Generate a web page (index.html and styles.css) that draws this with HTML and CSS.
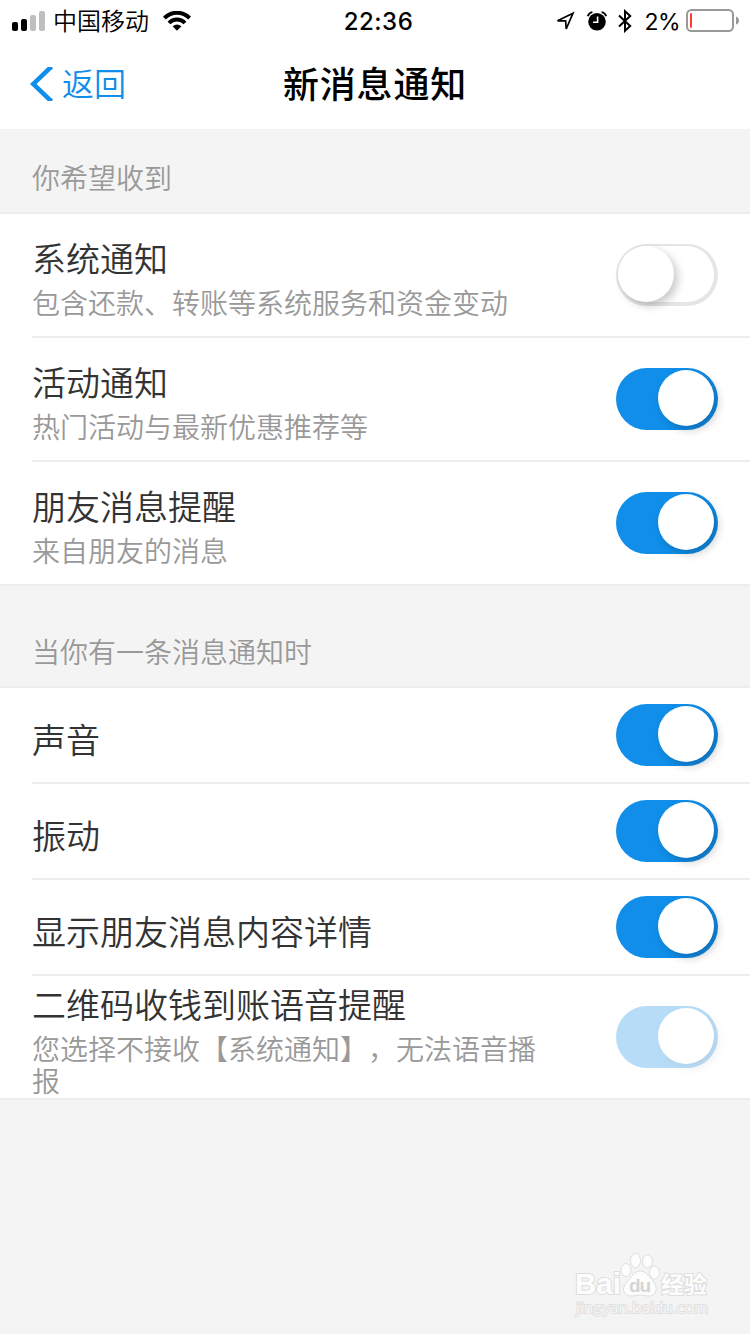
FILE: index.html
```
<!DOCTYPE html>
<html lang="zh-CN">
<head>
    <meta charset="UTF-8">
    <title>新消息通知</title>
    <link rel="stylesheet" href="styles.css">
</head>
<body>

<header>
    <div class="status-bar">
        <div class="status-left">
            <svg class="signal" width="34" height="20" viewBox="0 0 34 20">
                <rect x="0" y="11" width="6" height="9" rx="2"/>
                <rect x="9" y="8" width="6" height="12" rx="2"/>
                <rect x="18" y="4" width="6" height="16" rx="2" fill="#bfbfbf"/>
                <rect x="27" y="0" width="6" height="20" rx="2" fill="#bfbfbf"/>
            </svg>
            <span class="carrier">中国移动</span>
            <svg class="wifi" width="28" height="20" viewBox="0 0 28 20">
                <path d="M1.4 7.2C8.4-.1 19.6-.1 26.6 7.2" fill="none" stroke="#000" stroke-width="4"/>
                <path d="M6 12C10.4 7.3 17.6 7.3 22 12" fill="none" stroke="#000" stroke-width="3.8"/>
                <path d="M9.6 15.3Q14 11.5 18.4 15.3L14 19.8Z"/>
            </svg>
        </div>
        <div class="time">22:36</div>
        <div class="status-right">
            <svg width="20" height="20" viewBox="0 0 20 20">
                <path d="M2.5 9.8L18 2.2L11.2 18L10.6 9.8Z" fill="none" stroke="#000" stroke-width="1.7"/>
            </svg>
            <svg class="alarm" width="20" height="20" viewBox="0 0 20 20">
                <circle cx="10" cy="10.8" r="8.8"/>
                <path d="M.8 5.2Q2 1.800 5.400 1.200M19.200 5.200Q18 1.800 14.600 1.200" fill="none" stroke="#000" stroke-width="1.8"/>
                <path d="M10.600 5.500V11.300H6" fill="none" stroke="#fff" stroke-width="1.6"/>
            </svg>
            <svg class="bluetooth" width="14" height="24" viewBox="0 0 14 24">
                <path d="M1 6.500L12.200 17L7 21.800V2.200L12.200 7L1 17.500" fill="none" stroke="#000" stroke-width="2"/>
            </svg>
            <span class="percent">2%</span>
            <svg class="battery" width="54" height="24" viewBox="0 0 54 24">
                <rect x="1" y="1" width="46" height="21" rx="4.5" fill="#fff" stroke="#999" stroke-width="2"/>
                <rect x="4" y="4" width="2" height="15" rx="1" fill="#ff3b30"/>
                <path d="M50 7.5Q53 8.5 53 11.5Q53 14.5 50 15.5Z" fill="#999"/>
            </svg>
        </div>
    </div>
    <div class="nav-bar">
        <a class="back" href="#">
            <svg width="24" height="34" viewBox="0 0 24 34">
                <path d="M21.500 -.5L3.200 17L21.500 34.500" fill="none" stroke="#108ee9" stroke-width="4.500"/>
            </svg>
            <span>返回</span>
        </a>
        <h1>新消息通知</h1>
    </div>
</header>

<h2 class="first">你希望收到</h2>
<ul>
    <li>
        <div class="text">
            <p class="name">系统通知</p>
            <p class="desc">包含还款、转账等系统服务和资金变动</p>
        </div>
        <span class="switch"></span>
    </li>
    <li>
        <div class="text">
            <p class="name">活动通知</p>
            <p class="desc">热门活动与最新优惠推荐等</p>
        </div>
        <span class="switch on"></span>
    </li>
    <li>
        <div class="text">
            <p class="name">朋友消息提醒</p>
            <p class="desc">来自朋友的消息</p>
        </div>
        <span class="switch on"></span>
    </li>
</ul>

<h2>当你有一条消息通知时</h2>
<ul>
    <li class="single">
        <p class="name">声音</p>
        <span class="switch on"></span>
    </li>
    <li class="single">
        <p class="name">振动</p>
        <span class="switch on"></span>
    </li>
    <li class="single">
        <p class="name">显示朋友消息内容详情</p>
        <span class="switch on"></span>
    </li>
    <li class="long">
        <div class="text">
            <p class="name">二维码收钱到账语音提醒</p>
            <p class="desc">您选择不接收【系统通知】，无法语音播报</p>
        </div>
        <span class="switch on disabled"></span>
    </li>
</ul>

<footer>
    <svg class="watermark" width="140" height="70" viewBox="0 0 140 70">
        <text class="brand" x="5" y="44" textLength="46" lengthAdjust="spacingAndGlyphs">Bai</text>
        <ellipse cx="56" cy="20" rx="5" ry="6.5"/>
        <ellipse cx="65.5" cy="10.5" rx="5" ry="7"/>
        <ellipse cx="77.5" cy="11.5" rx="5" ry="6.5"/>
        <ellipse cx="84.5" cy="22.5" rx="5" ry="6.5"/>
        <path d="M70 21C76 21 79 26 83 31C89 38 86 46 79 46C75 46 73 45 70 45C67 45 65 46 61 46C53 46 51 38 57 32C61 28 64 21 70 21Z"/>
        <text class="du" x="59" y="42" textLength="22">du</text>
        <text class="cn" x="91" y="43" textLength="46">经验</text>
        <text class="url" x="6" y="63" textLength="132" lengthAdjust="spacingAndGlyphs">jingyan.baidu.com</text>
    </svg>
</footer>

</body>
</html>
```
FILE: styles.css
```
* {
    box-sizing: border-box;
}
body {
    margin: 0;
    min-height: 1334px;
    background: #f4f4f4;
    font-family: "Noto Sans CJK SC", sans-serif;
    font-weight: 350;
    display: flex;
    flex-direction: column;
    text-spacing-trim: space-all;
}
h1, h2, p, ul {
    margin: 0;
    padding: 0;
}
header {
    height: 129px;
    background: #fff;
}
.status-bar {
    height: 41px;
    display: grid;
    grid-template-columns: 1fr auto 1fr;
    align-items: center;
    padding: 0 10px 0 12px;
    font-size: 24px;
    line-height: 40px;
}
.status-left, .status-right {
    display: flex;
    align-items: center;
}
.signal {
    margin-bottom: 1px;
}
.carrier {
    margin: 0 14px 0 7px;
    padding-bottom: 2px;
}
.wifi {
    margin-bottom: 1px;
}
.time {
    font-family: Inter, sans-serif;
    font-weight: 500;
    font-size: 24px;
    letter-spacing: 0.5px;
    padding: 1px 0 0 5px;
}
.status-right {
    justify-content: flex-end;
}
.status-right svg:not(.battery) {
    margin-bottom: 1px;
}
.alarm {
    margin: 0 11px 0 12px;
}
.percent {
    font-family: Inter, sans-serif;
    font-weight: 400;
    font-size: 23px;
    letter-spacing: -0.6px;
    padding-top: 1px;
    margin: 0 6px 0 13px;
}
.nav-bar {
    height: 87px;
    display: grid;
    grid-template-columns: 1fr auto 1fr;
    align-items: center;
    padding: 0 30px;
}
.back {
    display: flex;
    align-items: center;
    gap: 8px;
    color: #108ee9;
    font-size: 32px;
    line-height: 40px;
    text-decoration: none;
}
.back svg {
    margin-bottom: 2px;
}
.back span {
    padding-bottom: 5px;
}
h1 {
    font-size: 36px;
    line-height: 48px;
    font-weight: 500;
    letter-spacing: 0.8px;
    padding-bottom: 5px;
}
h2 {
    height: 100px;
    padding: 45px 32px 0;
    font-size: 28px;
    line-height: 40px;
    font-weight: 350;
    color: #999;
}
h2.first {
    height: 83px;
    padding-top: 28px;
}
ul {
    list-style: none;
    background: #fff;
    border-top: 2px solid #ededed;
    border-bottom: 2px solid #ededed;
}
li {
    height: 124px;
    margin-left: 32px;
    padding-right: 32px;
    border-bottom: 2px solid #ededed;
    display: flex;
    align-items: center;
    justify-content: space-between;
}
li:last-child {
    height: 122px;
    border-bottom: 0;
}
li.single {
    height: 96px;
}
.text {
    padding-top: 6px;
}
.single .name {
    padding-top: 8px;
}
.name {
    font-size: 34px;
    line-height: 48px;
    color: #333;
}
.desc {
    font-size: 28px;
    line-height: 40px;
    color: #999;
}
.long .text {
    width: 520px;
    padding-top: 2px;
}
.long .desc {
    padding-top: 4px;
    line-height: 32px;
}
.switch {
    flex: none;
    width: 102px;
    height: 62px;
    padding: 2px 4px 4px 2px;
    border-radius: 31px;
    background: #e5e5e5;
    display: flex;
}
/* knob */
.switch::after {
    content: "";
    width: 56px;
    height: 56px;
    border-radius: 50%;
    background: #fff;
    box-shadow: 4px 4px 8px rgba(0, 0, 0, 0.21);
}
.switch:not(.on) {
    background: linear-gradient(#fff, #fff) content-box, #e5e5e5;
}
.switch.on {
    justify-content: flex-end;
    background: #108ee9;
}
.switch.disabled {
    opacity: 0.3;
}
footer {
    margin-top: auto;
    height: 84px;
    padding-right: 40px;
    display: flex;
    justify-content: flex-end;
}
.watermark {
    fill: #fdfdfd;
    stroke: #dedede;
    stroke-width: 1;
}
.watermark text {
    font-family: "Liberation Sans", "Noto Sans CJK SC", sans-serif;
    paint-order: stroke;
    stroke-width: 2;
}
.watermark .brand {
    font-size: 29px;
    font-weight: 700;
}
.watermark .du {
    font-size: 19px;
    font-weight: 700;
    fill: #d4d4d4;
    stroke: none;
}
.watermark .cn {
    font-size: 23px;
    font-weight: 700;
}
.watermark .url {
    font-family: Lato, sans-serif;
    font-size: 16px;
    stroke: #e0e0e0;
}
```
